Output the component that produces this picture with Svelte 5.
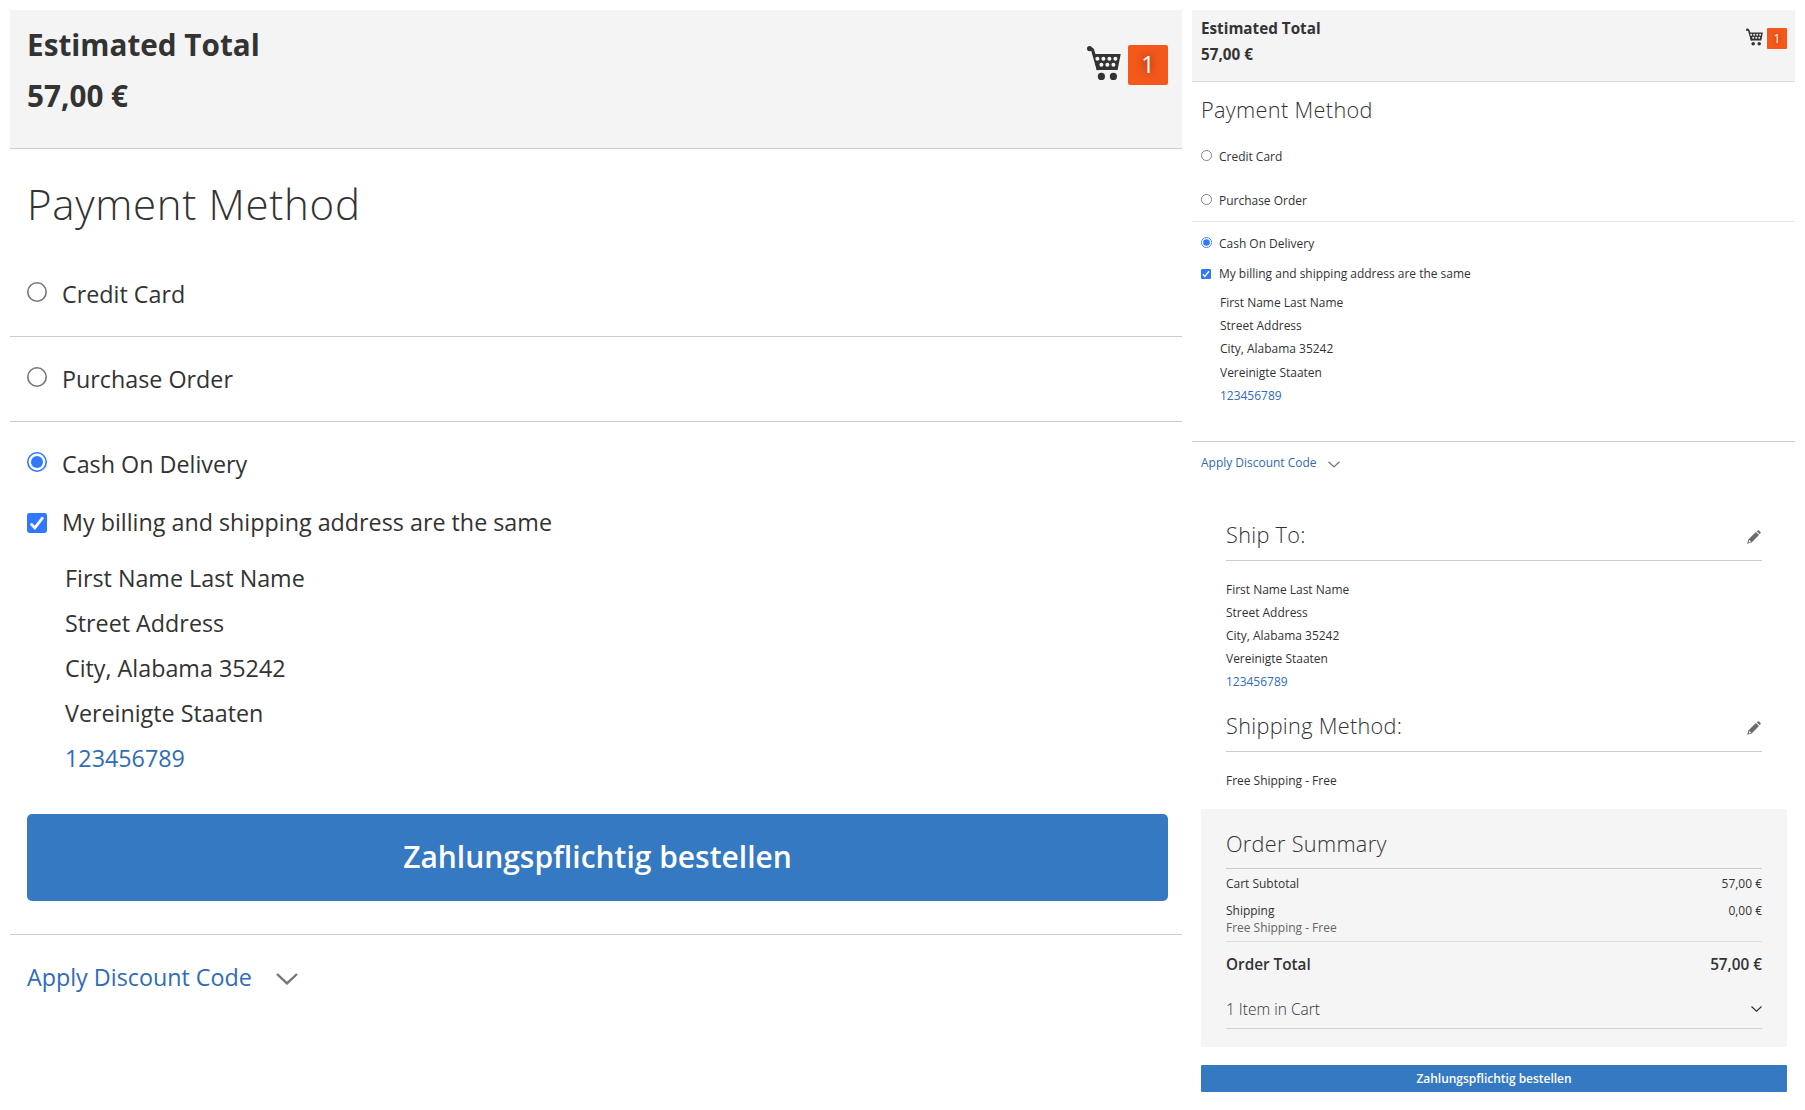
<script>
  const address = ['First Name Last Name', 'Street Address', 'City, Alabama 35242', 'Vereinigte Staaten'];
  const phone = '123456789';
  const methods = ['Credit Card', 'Purchase Order', 'Cash On Delivery'];
  const sections = ['Ship To:', 'Shipping Method:'];
</script>

{#snippet cart()}
  <svg class="cart" viewBox="0 0 34 34">
    <path d="M2.4 2.4 L5.4 3.4 L11 22.6" fill="none" stroke="#333" stroke-width="3.2" stroke-linejoin="round" stroke-linecap="round" />
    <circle cx="2.6" cy="2.6" r="2.6" fill="#333" />
    <path d="M6.4 8 H33.7 L30.6 24 H9.6 Z" fill="#333" />
    {#each [10.4, 16.4, 22.4, 28.4] as x}<circle cx={x} cy="12.7" r="2" fill="#f4f4f4" />{/each}
    {#each [14.4, 20.4, 26.4] as x}<circle cx={x} cy="18.7" r="2" fill="#f4f4f4" />{/each}
    <circle cx="14.4" cy="30.4" r="3.6" fill="#333" />
    <circle cx="26.4" cy="30.4" r="3.6" fill="#333" />
  </svg>
{/snippet}

{#snippet chevron()}
  <svg class="chevron" viewBox="0 0 22 12"><path d="M1 1 L11 10.4 L21 1" fill="none" stroke="currentColor" stroke-width="2.4" /></svg>
{/snippet}

{#snippet pencil()}
  <svg class="pencil" viewBox="0 0 14 14">
    <path d="M0.2 13.8 L1.3 9.4 L8.9 2.1 L12 5.1 L4.6 12.6 Z M9.7 1.3 L10.7 0.4 Q11.4 0 12 0.5 L13.5 2 Q14 2.6 13.5 3.3 L12.7 4.3 Z" fill="#6b6b6b" />
    <path d="M2.2 9.8 L4.2 11.9 L1.7 12.5 Z" fill="#fff" />
  </svg>
{/snippet}

{#snippet radio(on)}
  <svg class="control" viewBox="0 0 20 20">
    <circle cx="10" cy="10" r="9.2" fill="#fff" stroke={on ? '#2f78ff' : '#767676'} stroke-width="1.6" />
    {#if on}<circle cx="10" cy="10" r="6" fill="#2f78ff" />{/if}
  </svg>
{/snippet}

{#snippet payment()}
  <header>
    <div class="estimate">
      <strong>Estimated Total</strong>
      <strong>57,00 €</strong>
    </div>
    <div class="minicart">{@render cart()}<span class="badge">1</span></div>
  </header>
  <h1>Payment Method</h1>
  {#each methods as method, i}
    <div class="method m{i}">{@render radio(i === 2)}<span>{method}</span></div>
  {/each}
  <div class="same">
    <svg class="control" viewBox="0 0 20 20">
      <rect width="20" height="20" rx="2.4" fill="#2f78ff" />
      <path d="M3.8 10.6 L7.8 14.8 L16 4.4" fill="none" stroke="#fff" stroke-width="2.8" />
    </svg>
    <span>My billing and shipping address are the same</span>
  </div>
  <div class="address indented">
    {#each address as line}<div>{line}</div>{/each}
    <a href="#tel">{phone}</a>
  </div>
{/snippet}

<main>
  <section class="panel large">
    {@render payment()}
    <button>Zahlungspflichtig bestellen</button>
    <div class="discount"><span>Apply Discount Code</span>{@render chevron()}</div>
  </section>

  <section class="panel small">
    {@render payment()}
    <div class="discount"><span>Apply Discount Code</span>{@render chevron()}</div>
    <div class="shipping">
      {#each sections as title, i}
        <h2 class="s{i}"><span>{title}</span>{@render pencil()}</h2>
        {#if i === 0}
          <div class="address">
            {#each address as line}<div>{line}</div>{/each}
            <a href="#tel">{phone}</a>
          </div>
        {:else}
          <div class="carrier">Free Shipping - Free</div>
        {/if}
      {/each}
    </div>
    <div class="summary">
      <h2><span>Order Summary</span></h2>
      <div class="row subtotal"><span>Cart Subtotal</span><span>57,00 €</span></div>
      <div class="row ship"><span>Shipping</span><span>0,00 €</span></div>
      <div class="row note"><span>Free Shipping - Free</span></div>
      <div class="row total"><span>Order Total</span><span>57,00 €</span></div>
      <div class="row items"><span>1 Item in Cart</span>{@render chevron()}</div>
    </div>
    <button>Zahlungspflichtig bestellen</button>
  </section>
</main>

<style>
  :global(body) { background: #fff; }
  * { box-sizing: border-box; }
  main {
    display: flex;
    gap: 10px;
    padding: 10px;
    width: 1805px;
    height: 1110px;
    color: #333;
    font-family: 'Open Sans', sans-serif;
    overflow: hidden;
  }
  svg { display: block; flex: none; }
  h1, h2 { margin: 0; font-weight: 300; white-space: nowrap; }
  a { color: #2f6cb5; text-decoration: none; display: block; }
  .panel { display: flex; flex-direction: column; flex: none; white-space: nowrap; }
  .panel > * { flex: none; }
  header { display: flex; justify-content: space-between; background: #f4f4f4; border-bottom: 1px solid #ccc; }
  .estimate strong { display: block; font-weight: 700; }
  .minicart { display: flex; align-items: flex-start; }
  .badge { background: #f4581b; color: #fff; text-align: center; text-shadow: 0 0 8px rgba(0, 0, 0, 0.5); }
  .method, .same { display: flex; align-items: center; }
  .discount { display: flex; align-items: center; color: #2f6cb5; border-top: 1px solid #ccc; }
  .discount .chevron { color: #757575; }
  button { border: 0; padding: 0; background: #3579c2; color: #fff; font-family: inherit; font-weight: 600; }

  .large { width: 1172px; font-size: 23.3px; }
  .large header { height: 139px; padding: 8px 14px 0 17px; }
  .large .estimate { font-size: 29.7px; line-height: 51px; padding-top: 1px; }
  .large .cart { width: 34px; height: 34px; margin: 28px 7px 0 0; }
  .large .badge { width: 40px; height: 40px; margin-top: 27px; border-radius: 2px; line-height: 38px; text-shadow: 0 0 9px rgba(0, 0, 0, 0.65); }
  .large h1 { font-size: 42px; line-height: 109px; padding-left: 17px; letter-spacing: 0.7px; }
  .large .control { width: 20px; height: 20px; margin: 0 15px 5px 17px; }
  .large .m0 { line-height: 71px; padding: 1px 0 6px; border-bottom: 1px solid #ccc; }
  .large .m1 { line-height: 83px; padding-top: 1px; border-bottom: 1px solid #ccc; }
  .large .m2 { line-height: 83px; padding-top: 1px; }
  .large .same { line-height: 33px; }
  .large .same .control { margin-bottom: 0; margin-top: 1px; }
  .large .address { margin: 17px 0 33px 55px; line-height: 45px; }
  .large button { height: 87px; margin: 0 14px 33px 17px; padding-bottom: 3px; border-radius: 5px; font-size: 29.98px; }
  .large .discount { line-height: 83px; padding: 1px 0 0 17px; }
  .large .discount .chevron { width: 22px; height: 12px; margin: 3px 0 0 24px; }

  .small { width: 603px; font-size: 11.98px; }
  .small header { height: 72px; padding: 4px 8px 0 9px; border-color: #ddd; }
  .small .estimate { font-size: 15.25px; line-height: 26px; padding-top: 1px; }
  .small .cart { width: 17px; height: 18px; margin: 14px 4px 0 0; }
  .small .badge { width: 20px; height: 21px; margin-top: 14px; border-radius: 1px; line-height: 21px; text-shadow: 0 0 4px rgba(0, 0, 0, 0.5); }
  .small h1 { font-size: 21.7px; line-height: 55px; padding-left: 9px; letter-spacing: 0.33px; }
  .small .control { width: 11px; height: 11px; margin: 0 7.5px 3px 8.5px; }
  .small .m0 { line-height: 39px; }
  .small .m1 { line-height: 44px; height: 46px; padding-top: 4px; border-bottom: 1px solid #e5e5e5; }
  .small .m2 { line-height: 43px; }
  .small .same { line-height: 17px; }
  .small .same .control { width: 10px; height: 10px; margin: 1px 8px 0 9px; }
  .small .address { line-height: 23.15px; }
  .small .indented { margin: 9.1px 0 34.15px 28px; }
  .small .discount { line-height: 42px; padding-left: 9px; height: 43px; }
  .small .discount .chevron { width: 12px; height: 7px; margin: 3px 0 0 11px; }
  .shipping { margin: 26px 33px 0 34px; }
  h2 { display: flex; justify-content: space-between; align-items: center; font-size: 21.7px; border-bottom: 1px solid #ccc; line-height: 50px; letter-spacing: 0.3px; }
  .pencil { width: 14px; height: 14px; margin: 3px 1px 0 0; }
  .s1 .pencil { margin-top: 5px; }
  .shipping .address { margin: 17px 0 7px; height: 115.75px; line-height: 23.05px; }
  .carrier { line-height: 57px; height: 57.25px; }
  .summary { background: #f5f5f5; margin: 0 8px 18px 9px; padding: 10px 25px 0; height: 238px; }
  .summary h2 { line-height: 49px; }
  .row { display: flex; justify-content: space-between; align-items: center; }
  .subtotal { line-height: 28px; padding-top: 1px; }
  .ship { line-height: 17px; margin-top: 4px; }
  .note { line-height: 17px; padding-bottom: 5px; color: #666; border-bottom: 1px solid #ddd; }
  .total { line-height: 45px; padding-bottom: 1px; font-size: 15.3px; font-weight: 600; }
  .items { line-height: 38px; margin-top: 2px; font-size: 15.5px; font-weight: 300; border-bottom: 1px solid #d4d4d4; }
  .items .chevron { width: 11px; height: 6px; }
  .small button { height: 27px; margin: 0 8px 0 9px; border-radius: 1px; font-size: 11.98px; }
</style>
